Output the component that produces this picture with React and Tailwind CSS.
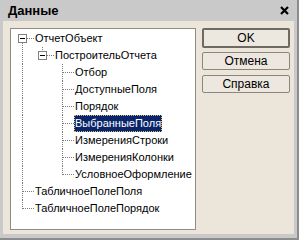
import React from "react";

const DOT = "#7c7c7c";

function VLineCol({ on }) {
  return (
    <svg width="20" height="17" className="shrink-0 block" shapeRendering="crispEdges">
      {on && <line x1="4.5" y1="0" x2="4.5" y2="17" stroke={DOT} strokeDasharray="1 1" />}
    </svg>
  );
}

function Connector({ box, up, down }) {
  return (
    <svg width="16" height="17" className="shrink-0 block" shapeRendering="crispEdges">
      {up && <line x1="4.5" y1={box ? 0 : 0} x2="4.5" y2={box ? 4 : 8.5} stroke={DOT} strokeDasharray="1 1" />}
      {down && <line x1="4.5" y1={box ? 13 : 8} x2="4.5" y2="17" stroke={DOT} strokeDasharray="1 1" />}
      {box ? (
        <>
          <rect x="0.5" y="4.5" width="8" height="8" fill="#fff" stroke="#808080" />
          <line x1="2" y1="8.5" x2="7" y2="8.5" stroke="#000" />
          <line x1="9" y1="8.5" x2="16" y2="8.5" stroke={DOT} strokeDasharray="1 1" />
        </>
      ) : (
        <line x1="5" y1="8.5" x2="16" y2="8.5" stroke={DOT} strokeDasharray="1 1" />
      )}
    </svg>
  );
}

const rows = [
  { text: "ОтчетОбъект", cols: [], box: true, up: false, down: true },
  { text: "ПостроительОтчета", cols: [true], box: true, up: true, down: false },
  { text: "Отбор", cols: [true, false], up: true, down: true },
  { text: "ДоступныеПоля", cols: [true, false], up: true, down: true },
  { text: "Порядок", cols: [true, false], up: true, down: true },
  { text: "ВыбранныеПоля", cols: [true, false], up: true, down: true, sel: true },
  { text: "ИзмеренияСтроки", cols: [true, false], up: true, down: true },
  { text: "ИзмеренияКолонки", cols: [true, false], up: true, down: true },
  { text: "УсловноеОформление", cols: [true, false], up: true, down: false },
  { text: "ТабличноеПолеПоля", cols: [], up: true, down: true },
  { text: "ТабличноеПолеПорядок", cols: [], up: true, down: false },
];

function Btn({ children, def, h }) {
  return (
    <div
      className={
        "w-[88px] flex items-center justify-center rounded-[2px] bg-[#ece8df] text-[12px] text-black " +
        (def ? "border-2 border-[#6e6a63] " : "border border-[#8a867e] ") +
        h
      }
    >
      {children}
    </div>
  );
}

export default function App() {
  return (
    <div
      className="w-[299px] h-[240px] bg-[#c9c9c9] border-r-2 border-b-2 border-[#8c8c8c] flex flex-col overflow-hidden"
      style={{ fontFamily: '"Liberation Sans", Arial, sans-serif' }}
    >
      <div className="h-[21px] flex items-center justify-between pl-[8px] pr-[8px] shrink-0">
        <span className="font-bold text-[13px] text-black leading-none">Данные</span>
        <svg width="9" height="9" viewBox="0 0 9 9" className="block mr-[0px]">
          <path d="M1 1 L8 8 M8 1 L1 8" stroke="#000" strokeWidth="2.2" />
        </svg>
      </div>
      <div className="flex-1 ml-[3px] mr-[3px] mb-[4px] bg-[#ebe5da] flex pt-[7px] pl-[7px] pb-[4px] gap-[6px]">
        <div className="w-[186px] h-[202px] bg-white border border-[#8f8b85] pt-[1px] pl-[7px] overflow-hidden">
          {rows.map((r, i) => (
            <div key={i} className="flex items-center h-[17px]">
              {r.cols.map((c, j) => (
                <VLineCol key={j} on={c} />
              ))}
              <Connector box={r.box} up={r.up} down={r.down} />
              <span
                className={
                  "text-[11px] leading-[17px] h-[17px] px-[1px] whitespace-nowrap " +
                  (r.sel
                    ? "bg-[#0a246a] text-white outline outline-1 outline-dotted outline-[#d8c070] -outline-offset-1"
                    : "text-black")
                }
              >
                {r.text}
              </span>
            </div>
          ))}
        </div>
        <div className="flex flex-col">
          <Btn def h="h-[20px]">OK</Btn>
          <div className="h-[4px]" />
          <Btn h="h-[18px]">Отмена</Btn>
          <div className="h-[5px]" />
          <Btn h="h-[18px]">Справка</Btn>
        </div>
      </div>
    </div>
  );
}
